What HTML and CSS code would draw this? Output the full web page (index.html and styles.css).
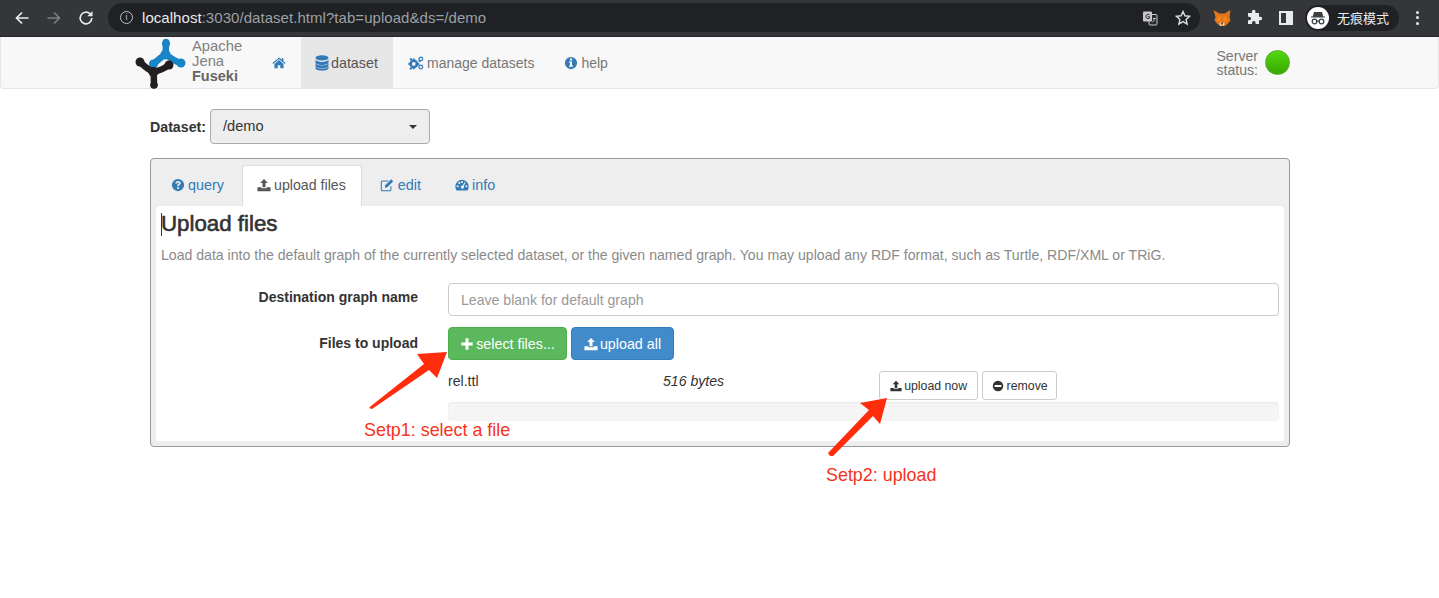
FILE: index.html
```html
<!DOCTYPE html>
<html lang="en">
<head>
<meta charset="utf-8">
<title>Apache Jena Fuseki</title>
<link rel="stylesheet" href="styles.css">
</head>
<body>
<svg class="sprite" width="0" height="0" aria-hidden="true">
  <symbol id="i-upload" viewBox="0 0 16 16"><path d="M8 1l4.4 4.6H9.7V10.6H6.3V5.600H3.600z"/><path d="M0.500 10.500H5v1.300h6v-1.300h4.500V15H0.500z"/></symbol>
  <symbol id="i-plus" viewBox="0 0 16 16"><path d="M6.300 1.500h3.400v4.800h4.800v3.400H9.700v4.800H6.300V9.700H1.500V6.300h4.800z"/></symbol>
  <symbol id="i-minus" viewBox="0 0 16 16"><path fill-rule="evenodd" d="M8 1a7 7 0 1 1 0 14A7 7 0 0 1 8 1zM3.500 6.700v2.600h9V6.700z"/></symbol>
  <symbol id="i-question" viewBox="0 0 16 16"><path fill-rule="evenodd" d="M8 1a7 7 0 1 1 0 14A7 7 0 0 1 8 1zM7 10.600v2h2v-2zM5 6.200h2c0-.8.400-1.100 1-1.100s1 .3 1 .9c0 1-2 1.200-2 3.500h2c0-1.700 2.100-1.800 2.100-3.700C11.100 4.200 9.700 3.300 8 3.300c-1.800 0-3 1.200-3 2.900z"/></symbol>
  <symbol id="i-info" viewBox="0 0 16 16"><path fill-rule="evenodd" d="M8 1a7 7 0 1 1 0 14A7 7 0 0 1 8 1zM6.800 2.900v2.200h2.400V2.900zM5.800 6.200v1.400h1v3.300h-1v1.400h4.400v-1.400h-1V6.200z"/></symbol>
  <symbol id="i-home" viewBox="0 0 16 16"><path d="M8 1.800L.500 8l.800 1L8 3.500 14.700 9l.800-1L13 5.900V2.500h-2v1.700z"/><path d="M8 4.700l5.200 4.400v5H9.500V10.500h-3v3.600H2.800v-5z"/></symbol>
  <symbol id="i-db" viewBox="0 0 14 16"><ellipse cx="7" cy="2.900" rx="6.500" ry="2.600"/><path d="M.500 4.800C1.500 6.300 4 6.900 7 6.900s5.500-.6 6.500-2.100v2.600c0 1.400-2.900 2.500-6.500 2.500S.500 8.800.500 7.400z"/><path d="M.500 8.300C1.500 9.800 4 10.500 7 10.500s5.500-.7 6.500-2.200v2.400c0 1.400-2.900 2.500-6.500 2.500S.500 12.100.500 10.700z"/><path d="M.500 11.500c1 1.500 3.500 2.200 6.500 2.200s5.500-.7 6.500-2.200v1.700c0 1.400-2.900 2.400-6.500 2.400S.500 14.600.500 13.200z"/></symbol>
  <symbol id="i-cogs" viewBox="0 0 18 16"><circle cx="6.500" cy="9" r="3.600" fill="none" stroke="currentColor" stroke-width="3"/><path d="M5.300 2.800h2.400v2.400H5.300zM5.300 12.800h2.400v2.400H5.300zM.300 7.800h2.400v2.400H.300zM10.300 7.800h2.400v2.400h-2.400zM1.500 3.800l1.700-1.700 1.700 1.700-1.700 1.700zM8.100 10.400l1.700-1.700 1.700 1.700-1.700 1.700zM1.500 14.200l1.700 1.700 1.700-1.700-1.700-1.700zM11.500 5.500l1.700-1.700 1.700 1.700-1.700 1.700z"/><circle cx="14.500" cy="3.400" r="2.100" fill="none" stroke="currentColor" stroke-width="1.500"/><circle cx="14.500" cy="12.600" r="2.100" fill="none" stroke="currentColor" stroke-width="1.500"/></symbol>
  <symbol id="i-edit" viewBox="0 0 16 16"><path fill="none" stroke="currentColor" stroke-width="1.200" d="M12.500 9.500V13a1.500 1.500 0 0 1-1.500 1.500H3A1.500 1.500 0 0 1 1.500 13V5A1.500 1.500 0 0 1 3 3.500h6.500"/><path d="M6 8.200L12.800 1.400l2.300 2.300-6.800 6.800-2.800.5z"/></symbol>
  <symbol id="i-dash" viewBox="0 0 16 16"><path fill-rule="evenodd" d="M8 2a7.600 7.600 0 0 1 7.600 7.600c0 1.800-.6 3.400-1.500 4.600H1.900C1 13 .400 11.400.400 9.600A7.600 7.600 0 0 1 8 2zM3 8.200a1.200 1.200 0 1 0 0 2.400 1.200 1.200 0 0 0 0-2.400zM4.900 4.400a1.200 1.200 0 1 0 0 2.400 1.200 1.200 0 0 0 0-2.400zM8 3.300a1.200 1.200 0 1 0 0 2.400 1.200 1.200 0 0 0 0-2.400zM11.300 4.700L8.700 8.600a1.800 1.800 0 1 0 1.200.7l2.300-4.100zM13 8.200a1.200 1.200 0 1 0 0 2.400 1.200 1.200 0 0 0 0-2.400z"/></symbol>
</svg>

<header class="chrome">
  <div class="chrome-nav">
    <svg class="chrome-icon" viewBox="0 0 16 16"><path d="M14.500 8H2.500M8 2.500L2.500 8 8 13.500"/></svg>
    <svg class="chrome-icon dim" viewBox="0 0 16 16"><path d="M1.500 8h12M8 2.500L13.500 8 8 13.500"/></svg>
    <svg class="chrome-icon" viewBox="0 0 16 16"><path d="M13.800 8a5.800 5.800 0 1 1-1.700-4.100"/><path class="solid" d="M14.500 1v5.200H9.300z"/></svg>
  </div>
  <div class="omnibox">
    <span class="info-mark">i</span>
    <span class="url"><span class="url-host">localhost</span>:3030/dataset.html?tab=upload&amp;ds=/demo</span>
    <span class="omni-actions">
      <svg class="translate" viewBox="0 0 16 16"><rect x="7" y="4.500" width="8" height="10.500" rx="1" fill="#292a2d" stroke="#c8c8c8"/><rect x="1" y="1.500" width="9" height="10" rx="1" fill="#c8c8c8"/><path d="M7.500 4.800A2.200 2.200 0 1 0 7.500 8.200V6.700H5.700" stroke="#292a2d" fill="none"/><path d="M11 8.500h2.800M12.400 8.500c0 2-1 3-2 3.500" stroke="#c8c8c8" fill="none"/></svg>
      <svg class="star" viewBox="0 0 16 16"><path d="M8 1.500l1.900 4.300 4.600.5-3.400 3.100 1 4.600L8 11.600l-4.100 2.400 1-4.600-3.400-3.100 4.600-.5z"/></svg>
    </span>
  </div>
  <div class="chrome-ext">
    <svg class="ext-fox" viewBox="0 0 18 18"><path fill="#e2761b" d="M.500 1l6 3.500h5l6-3.500-1 7 1 3.500-2.500 3-3 2.500H7l-3-2.500-2.500-3 1-3.500z"/><path fill="#f6851b" d="M5 7l3 2-1 4-3.500-1.500zM13 7l-3 2 1 4 3.500-1.500z"/><path fill="#f4e3d0" d="M6.500 13.500l2.500 1 2.500-1-.5 3h-4z"/><path fill="#3d2a1c" d="M7.700 14.300h2.600L9.800 15.600H8.200z"/></svg>
    <svg class="ext-puzzle" viewBox="0 0 16 16"><path d="M6 1.500a1.700 1.700 0 0 1 3.400 0V3H13v3.700h1.300a1.800 1.800 0 0 1 0 3.600H13V14H9.600v-1.300a1.800 1.800 0 0 0-3.600 0V14H2v-3.700h1.300a1.800 1.800 0 0 0 0-3.600H2V3h4z"/></svg>
    <span class="ext-panel"><span class="ext-panel-fill"></span></span>
    <span class="incognito">
      <svg class="spy" viewBox="0 0 22 22"><circle cx="11" cy="11" r="11" fill="#fff"/><path fill="#3c4043" d="M7 5h8l1.300 4.500H18v1H4v-1h1.700z"/><g fill="none" stroke="#3c4043" stroke-width="1.300"><circle cx="7.500" cy="14.500" r="2.300"/><circle cx="14.500" cy="14.500" r="2.300"/><path d="M9.800 14.200h2.400"/></g></svg>
      <span class="incognito-label">无痕模式</span>
    </span>
    <span class="kebab"><i></i><i></i><i></i></span>
  </div>
</header>

<nav class="navbar">
  <a class="brand">
    <svg class="logo" viewBox="0 0 56 52">
      <g class="logo-blue">
        <path d="M31 5C31 12 30.500 15 30.500 17C27 20 22 23 19 27"/>
        <path d="M30.500 17C34 20 41 25 46 26"/>
        <circle cx="31" cy="6.500" r="4"/><circle cx="18.500" cy="27" r="4.500"/><circle cx="46" cy="26" r="4.500"/><circle cx="30.500" cy="17.500" r="5"/>
      </g>
      <g class="logo-black">
        <path d="M5 25C9 29 14 33 18.500 35C23 34 30 31 34 28"/>
        <path d="M18.500 35C19 40 19 44 19 48"/>
        <circle cx="5" cy="25" r="4.500"/><circle cx="34" cy="28" r="4.500"/><circle cx="19" cy="48" r="3.800"/><circle cx="18.500" cy="35" r="5"/>
      </g>
    </svg>
    <span class="brand-text">Apache<br>Jena<br><b>Fuseki</b></span>
  </a>
  <ul class="nav-list">
    <li class="nav-item home"><svg class="ic"><use href="#i-home"/></svg></li>
    <li class="nav-item active"><svg class="ic db"><use href="#i-db"/></svg> dataset</li>
    <li class="nav-item"><svg class="ic cogs"><use href="#i-cogs"/></svg> manage datasets</li>
    <li class="nav-item"><svg class="ic"><use href="#i-info"/></svg> help</li>
  </ul>
  <div class="server">
    <span class="server-label">Server<br>status:</span>
    <span class="lamp"></span>
  </div>
</nav>

<main class="page">
  <div class="dataset-row">
    <label class="dataset-label">Dataset:</label>
    <div class="dataset-select">/demo<span class="caret"></span></div>
  </div>

  <section class="panel">
    <ul class="tabs">
      <li class="tab"><svg class="ic"><use href="#i-question"/></svg> query</li>
      <li class="tab current"><svg class="ic"><use href="#i-upload"/></svg> upload files</li>
      <li class="tab"><svg class="ic"><use href="#i-edit"/></svg> edit</li>
      <li class="tab"><svg class="ic"><use href="#i-dash"/></svg> info</li>
    </ul>
    <div class="tab-body">
      <h2 class="title"><span class="text-cursor"></span>Upload files</h2>
      <p class="lead">Load data into the default graph of the currently selected dataset, or the given named graph. You may upload any RDF format, such as Turtle, RDF/XML or TRiG.</p>
      <div class="form">
        <label class="form-label first">Destination graph name</label>
        <input class="text-input" type="text" placeholder="Leave blank for default graph">
        <label class="form-label second">Files to upload</label>
        <div class="btn-row">
          <span class="btn green"><svg class="ic"><use href="#i-plus"/></svg> select files...</span>
          <span class="btn blue"><svg class="ic"><use href="#i-upload"/></svg> upload all</span>
        </div>
        <div class="file-row">
          <span class="file-name">rel.ttl</span>
          <span class="file-size">516 bytes</span>
          <span class="file-actions">
            <span class="btn small now"><svg class="ic"><use href="#i-upload"/></svg> upload now</span>
            <span class="btn small rm"><svg class="ic"><use href="#i-minus"/></svg> remove</span>
          </span>
        </div>
        <div class="progress"></div>
      </div>
    </div>
  </section>
</main>

<svg class="annotation arrows" viewBox="0 0 1439 598">
  <path d="M369 408L371 406 424 364 417 354 447 352 437 378 429 370 372 409z"/>
  <path d="M830 456L828 453 869 410 860 403 887 398 880 424 873 416 833 456z"/>
</svg>
<span class="annotation note note-one">Setp1: select a file</span>
<span class="annotation note note-two">Setp2: upload</span>
</body>
</html>
```
FILE: styles.css
```css
* { box-sizing: border-box; }
html, body { margin: 0; padding: 0; }
body {
  position: relative;
  height: 598px;
  overflow: hidden;
  background: #fff;
  color: #333;
  font-family: "Liberation Sans", Arial, sans-serif;
  font-size: 14.1px;
}
.sprite { position: absolute; }
.ic { width: 14px; height: 14px; fill: currentColor; vertical-align: -2px; flex: none; }

/* browser chrome */
.chrome {
  display: flex;
  align-items: center;
  height: 37px;
  background: #35363a;
  border-bottom: 1px solid #26272a;
}
.chrome-nav { display: flex; width: 108px; padding-left: 14px; gap: 16px; }
.chrome-icon { width: 16px; height: 16px; fill: none; stroke: #e8eaed; stroke-width: 1.700; }
.chrome-icon.dim { stroke: #7c7e82; }
.chrome-icon .solid { fill: #e8eaed; stroke: none; }
.omnibox {
  display: flex;
  align-items: center;
  width: 1092px;
  height: 29px;
  margin-top: -1px;
  padding-left: 12px;
  background: #202124;
  border-radius: 15px;
}
.info-mark {
  width: 13px;
  height: 13px;
  margin-right: 9px;
  border: 1.200px solid #bdc1c6;
  border-radius: 50%;
  color: #bdc1c6;
  font-size: 9px;
  line-height: 11px;
  text-align: center;
}
.url { color: #9aa0a6; font-size: 15px; letter-spacing: .05px; white-space: nowrap; }
.url-host { color: #e8eaed; }
.omni-actions { display: flex; align-items: center; gap: 17px; margin-left: auto; padding-right: 9px; }
.translate { width: 16px; height: 16px; }
.star { width: 16px; height: 16px; fill: none; stroke: #dadce0; stroke-width: 1.400; }
.chrome-ext { display: flex; align-items: center; padding-left: 13px; margin-top: -1px; }
.ext-fox { width: 18px; height: 18px; }
.ext-puzzle { width: 16px; height: 16px; margin-left: 15px; fill: #e8eaed; }
.ext-panel { width: 14px; height: 14px; margin-left: 17px; border: 2px solid #e8eaed; background: #35363a; display: flex; justify-content: flex-end; }
.ext-panel-fill { width: 5px; background: #e8eaed; }
.incognito {
  display: flex;
  align-items: center;
  width: 94px;
  height: 26px;
  margin-left: 12px;
  padding-left: 2px;
  background: #202124;
  border-radius: 13px;
}
.spy { width: 22px; height: 22px; }
.incognito-label { margin-left: 8px; color: #e8eaed; font: 13px "Noto Sans CJK SC", sans-serif; white-space: nowrap; }
.kebab { display: flex; flex-direction: column; gap: 2.500px; margin-left: 17px; }
.kebab i { width: 3px; height: 3px; border-radius: 50%; background: #e8eaed; }

/* app navbar */
.navbar {
  display: flex;
  align-items: stretch;
  height: 52px;
  padding-left: 134px;
  padding-right: 148px;
  background: #f8f8f8;
  border: 1px solid #e7e7e7;
  border-top: 0;
  border-radius: 0 0 4px 4px;
  margin-bottom: 20px;
}
.brand { display: flex; width: 132px; }
.logo { width: 56px; height: 52px; flex: none; }
.logo path { fill: none; stroke-linecap: round; stroke-linejoin: round; stroke-width: 6.500; }
.logo-blue path { stroke: #1a85c6; }
.logo-black path { stroke: #231f20; }
.logo-blue circle { fill: #1a85c6; }
.logo-black circle { fill: #231f20; }
.brand-text { margin: 2px 0 0 1px; color: #808080; font-size: 14.800px; line-height: 15px; }
.brand-text b { color: #666; font-size: 14.500px; }
.nav-list { display: flex; margin: 0; padding: 0; list-style: none; }
.nav-item { display: flex; align-items: center; gap: 3px; padding: 0 15px; color: #777; font-size: 14px; white-space: nowrap; }
.nav-item .ic { color: #337ab7; }
.nav-item.home { padding: 0 15px 0 5px; }
.nav-item.active { width: 92px; background: #e7e7e7; color: #555; padding: 0 0 0 14px; font-size: 14.300px; gap: 2px; }
.db { width: 14px; height: 16px; }
.cogs { width: 16px; }
.server { display: flex; align-items: center; margin-left: auto; }
.server-label { color: #777; font-size: 14.100px; line-height: 14px; margin-top: 1px; }
.lamp {
  width: 25px;
  height: 25px;
  margin-left: 7px;
  margin-top: -1px;
  border-radius: 50%;
  background: linear-gradient(#54d80f, #38a800);
  border: 1px solid #5aa92c;
}

/* page */
.page { padding: 0 149px 0 150px; }
.dataset-row { display: flex; align-items: center; gap: 4px; height: 35px; }
.dataset-label { font-weight: bold; font-size: 14.200px; }
.dataset-select {
  position: relative;
  width: 220px;
  height: 35px;
  padding: 0 12px;
  background: #eee;
  border: 1px solid #aaa;
  border-radius: 4px;
  line-height: 33px;
  font-size: 14.600px;
}
.caret {
  position: absolute;
  right: 12px;
  top: 15px;
  border: 4px solid transparent;
  border-top-color: #333;
  border-bottom: 0;
}
.panel {
  margin-top: 14px;
  height: 289px;
  padding: 6px 5px 5px;
  background: #eee;
  border: 1px solid #999;
  border-radius: 4px;
}
.tabs { display: flex; gap: 2px; height: 41px; margin: 0; padding: 0; list-style: none; }
.tab { display: flex; align-items: center; gap: 3px; padding: 0 15px 2px 15px; color: #337ab7; font-size: 14.400px; white-space: nowrap; }
.tab:nth-child(1) { padding-right: 16px; }
.tab:nth-child(3) { gap: 4px; padding-left: 16px; padding-right: 17px; }
.tab:nth-child(4) { padding-left: 15px; }
.tab.current {
  padding: 0 15px 2px 14px;
  background: #fff;
  color: #555;
  border: 1px solid #ddd;
  border-bottom: 0;
  border-radius: 4px 4px 0 0;
  font-size: 14.200px;
}
.tab-body { height: 235px; padding: 0 5px; background: #fff; border-radius: 4px 4px 0 0; }
.title {
  position: relative;
  margin: 0;
  padding-top: 5px;
  height: 37px;
  color: #333;
  font-size: 22.300px;
  line-height: 26px;
  font-weight: normal;
  -webkit-text-stroke: .6px #333;
}
.text-cursor { display: inline-block; width: 1px; height: 23px; margin-right: -1px; background: #333; vertical-align: -5px; }
.lead { margin: 0; padding-top: 2px; height: 40px; color: #8a8a8a; line-height: 20px; white-space: nowrap; }
.form { display: grid; grid-template-columns: 257px 1fr; column-gap: 30px; }
.form-label { text-align: right; font-weight: bold; font-size: 14px; line-height: 20px; }
.form-label.first { padding-top: 4px; }
.form-label.second { margin-top: 17px; }
.text-input {
  height: 33px;
  width: 100%;
  padding: 0 12px;
  color: #555;
  background: #fff;
  border: 1px solid #ccc;
  border-radius: 4px;
  font: 14.100px "Liberation Sans", Arial, sans-serif;
}
.text-input::placeholder { color: #999; opacity: 1; }
.btn-row { grid-column: 2; display: flex; gap: 4px; margin-top: 11px; }
.btn {
  display: inline-flex;
  align-items: center;
  justify-content: center;
  gap: 2px;
  height: 33px;
  border: 1px solid transparent;
  border-radius: 4px;
  font-size: 14.300px;
  color: #fff;
  white-space: nowrap;
}
.green { width: 119px; background: #5cb85c; border-color: #4cae4c; }
.blue { width: 103px; background: #428bca; border-color: #357ebd; }
.file-row { grid-column: 2; display: flex; height: 30px; margin-top: 11px; }
.file-name { width: 215px; line-height: 20px; }
.file-size { font-style: italic; line-height: 20px; }
.file-actions { display: flex; gap: 4px; margin-left: 155px; }
.small { height: 29px; color: #333; background: #fff; border-color: #ccc; font-size: 12.300px; border-radius: 3px; }
.small .ic { width: 12px; height: 12px; }
.now { width: 99px; }
.rm { width: 75px; gap: 3px; }
.progress { grid-column: 2; height: 19px; margin-top: 1px; background: #f5f5f5; border-radius: 4px; box-shadow: inset 0 1px 2px rgba(0,0,0,.06); }

/* screenshot annotations on top of the page */
.annotation { position: absolute; }
.arrows { left: 0; top: 0; width: 1439px; height: 598px; fill: #ff2d0c; pointer-events: none; }
.note { color: #f6331c; font-size: 17.900px; line-height: 22px; white-space: nowrap; }
.note-one { left: 364px; top: 419px; }
.note-two { left: 826px; top: 464px; }
```
